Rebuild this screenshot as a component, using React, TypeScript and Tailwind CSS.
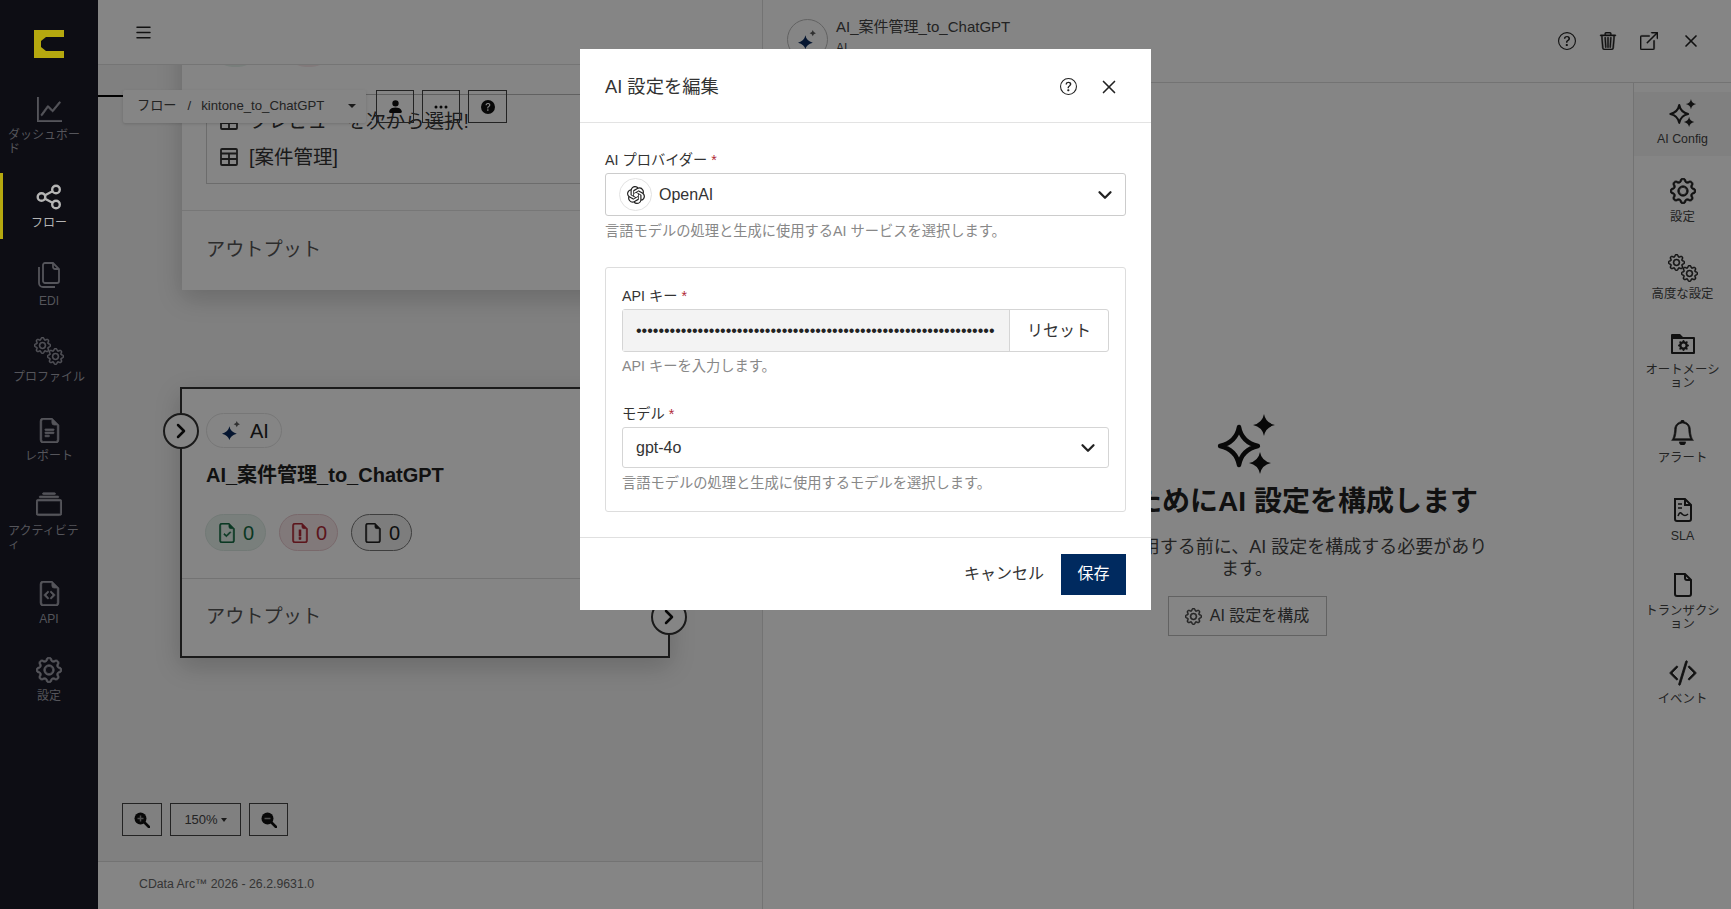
import React from 'react'
import { ChevronDown, ChevronRight, X } from 'lucide-react'
import {
  BsBell, BsBoxArrowUpRight, BsCodeSlash, BsCollection, BsFileEarmark, BsFileEarmarkCheck,
  BsFileEarmarkCode, BsFileEarmarkText, BsGear, BsGearFill, BsGraphUp, BsList,
  BsPersonFill, BsQuestionCircle, BsQuestionCircleFill, BsThreeDots, BsTrash3,
} from 'react-icons/bs'
import { SiOpenai } from 'react-icons/si'

const bold = { stroke: 'currentColor', strokeWidth: 0.45 }

const Logo = () => (
  <svg width="30" height="28" viewBox="0 0 30 28" fill="#b5a80f">
    <path d="M0 0H30V7H12L7 11V17L12 21H30V28H0Z" />
  </svg>
)

const Gears = ({ size = 30 }: { size?: number }) => (
  <svg width={size} height={size} viewBox="0 0 30 30" fill="currentColor">
    <BsGear x={0} y={1} size={17} {...bold} />
    <BsGear x={13} y={12} size={17} {...bold} />
  </svg>
)

const ShareNodes = () => (
  <svg width="26" height="26" viewBox="0 0 26 26" fill="none" stroke="currentColor" strokeWidth="2.400">
    <circle cx="20" cy="5.500" r="3.800" />
    <circle cx="5.500" cy="13" r="3.800" />
    <circle cx="20" cy="20.500" r="3.800" />
    <path d="M9 11.200l7.500-3.900M9 14.800l7.500 3.900" />
  </svg>
)

const Files = () => (
  <svg width="26" height="26" viewBox="0 0 26 26" fill="none" stroke="currentColor" strokeWidth="1.800">
    <path d="M9 1h8l6 6v12a2 2 0 0 1-2 2H9a2 2 0 0 1-2-2V3a2 2 0 0 1 2-2z" />
    <path d="M17 1v4a2 2 0 0 0 2 2h4" />
    <path d="M3 5v16a4 4 0 0 0 4 4h12" />
  </svg>
)

const TableMark = () => (
  <svg width="18" height="18" viewBox="0 0 18 18" fill="none" stroke="currentColor" strokeWidth="1.800" className="shrink-0">
    <rect x="1" y="1" width="16" height="16" rx="1" />
    <path d="M1 5.500h16M1 11h16M9 5.500V17" />
  </svg>
)

const Sparkles = ({ size = 24 }: { size?: number }) => (
  <svg width={size} height={size} viewBox="0 0 32 32" fill="currentColor">
    <path d="M12 7.500Q13.400 15.200 21.500 17Q13.400 18.800 12 26.500Q10.600 18.800 2.500 17Q10.600 15.200 12 7.500Z" fill="none" stroke="currentColor" strokeWidth="2.200" strokeLinejoin="round" />
    <path d="M24.500 1Q25.300 5.500 30 6.500Q25.300 7.500 24.500 12Q23.700 7.500 19 6.500Q23.700 5.500 24.500 1Z" />
    <path d="M22.500 20Q23.300 24.500 28 25.500Q23.300 26.500 22.500 31Q21.700 26.500 17 25.500Q21.700 24.500 22.500 20Z" />
  </svg>
)

const AiMark = ({ size = 19 }: { size?: number }) => (
  <svg width={size} height={size} viewBox="0 0 18 18">
    <path d="M7 5Q8 10.500 14 12Q8 13.500 7 18Q6 13.500 0 12Q6 10.500 7 5Z" fill="#0a2a5c" />
    <path d="M14 0Q14.500 2.500 17 3Q14.500 3.500 14 6Q13.500 3.500 11 3Q13.500 2.500 14 0Z" fill="#5f5f5f" />
  </svg>
)

const FileAlert = ({ size = 20 }: { size?: number }) => (
  <svg width={size} height={size} viewBox="0 0 16 16" fill="currentColor" {...bold}>
    <path d="M14 4.500V14a2 2 0 0 1-2 2H4a2 2 0 0 1-2-2V2a2 2 0 0 1 2-2h5.500zm-3 0A1.500 1.500 0 0 1 9.500 3V1H4a1 1 0 0 0-1 1v12a1 1 0 0 0 1 1h8a1 1 0 0 0 1-1V4.500z" />
    <rect x="7.200" y="5.500" width="1.600" height="5" />
    <rect x="7.200" y="11.500" width="1.600" height="1.700" />
  </svg>
)

const FolderGear = () => (
  <svg width="26" height="26" viewBox="0 0 26 26" fill="currentColor">
    <path d="M1 4a1 1 0 0 1 1-1h8l3 3h11a1 1 0 0 1 1 1v15a1 1 0 0 1-1 1H2a1 1 0 0 1-1-1zM3 8v13h20V8z" />
    <BsGearFill x={8} y={9} size={11} />
  </svg>
)

const SlaFile = () => (
  <svg width="26" height="26" viewBox="0 0 26 26" fill="none" stroke="currentColor" strokeWidth="2">
    <path d="M5 2h10l6 6v14a2 2 0 0 1-2 2H7a2 2 0 0 1-2-2z" />
    <path d="M15 2v6h6" />
    <path d="M8 7h4M8 11h4M8 19c2-5 3-3 4-2s3 3 6 0" strokeWidth="1.600" />
  </svg>
)

const ThickFile = () => (
  <svg width="26" height="26" viewBox="0 0 26 26" fill="none" stroke="currentColor" strokeWidth="2">
    <path d="M5 2h10l6 6v14a2 2 0 0 1-2 2H7a2 2 0 0 1-2-2z" />
    <path d="M15 2v4a2 2 0 0 0 2 2h4" />
  </svg>
)

const ZoomMark = ({ minus = false }: { minus?: boolean }) => (
  <svg width="16" height="16" viewBox="0 0 16 16">
    <circle cx="6.500" cy="6.500" r="6" fill="#111" />
    <path d="M10.500 10.500L15 15" stroke="#111" strokeWidth="2.600" strokeLinecap="round" />
    <path d={minus ? 'M3.500 6.500h6' : 'M3.500 6.500h6M6.500 3.500v6'} stroke="#999" strokeWidth="1.500" />
  </svg>
)

const navItems = [
  { label: 'ダッシュボード', icon: <BsGraphUp size={25} {...bold} />, height: 'h-[88px]', wrapped: true },
  { label: 'フロー', icon: <ShareNodes />, height: 'h-[78px]', active: true },
  { label: 'EDI', icon: <Files />, height: 'h-[76px]' },
  { label: 'プロファイル', icon: <Gears />, height: 'h-[79px]' },
  { label: 'レポート', icon: <BsFileEarmarkText size={25} {...bold} />, height: 'h-[75px]' },
  { label: 'アクティビティ', icon: <BsCollection size={26} {...bold} />, height: 'h-[88px]', wrapped: true },
  { label: 'API', icon: <BsFileEarmarkCode size={25} {...bold} />, height: 'h-[77px]' },
  { label: '設定', icon: <BsGear size={26} {...bold} />, height: 'h-[70px]' },
]

const tabItems = [
  { label: 'AI Config', icon: <Sparkles size={30} />, height: 'h-[78px]', active: true },
  { label: '設定', icon: <BsGear size={26} {...bold} />, height: 'h-[77px]' },
  { label: '高度な設定', icon: <Gears />, height: 'h-[76px]' },
  { label: 'オートメーション', icon: <FolderGear />, height: 'h-[88px]' },
  { label: 'アラート', icon: <BsBell size={25} {...bold} />, height: 'h-[78px]' },
  { label: 'SLA', icon: <SlaFile />, height: 'h-[75px]' },
  { label: 'トランザクション', icon: <ThickFile />, height: 'h-[88px]' },
  { label: 'イベント', icon: <BsCodeSlash size={28} {...bold} />, height: 'h-[70px]' },
]

const Asterisk = () => <span className="text-[#b02a37]"> *</span>

const App: React.FC = () => {
  return (
    <div className="relative flex h-[909px] w-full overflow-hidden bg-white font-['Liberation_Sans','Noto_Sans_CJK_JP',sans-serif] text-[#3a3a3a]">
      {/* Sidebar sits above the dim layer, its colours are as photographed */}
      <aside className="relative z-20 flex w-[98px] shrink-0 flex-col bg-[#0d0d14] text-[#55555b]">
        <div className="flex h-[85px] shrink-0 justify-center pt-[30px]">
          <Logo />
        </div>
        {navItems.map((item) => (
          <div key={item.label} className={`relative flex shrink-0 flex-col items-center px-[8px] pt-[11px] ${item.height} ${item.active ? 'text-[#b4b4b4]' : ''}`}>
            {item.active && <span className="absolute left-0 top-0 h-[66px] w-[3px] bg-[#b5a80f]" />}
            <div className="flex h-[26px] items-center justify-center">{item.icon}</div>
            <div className={`mt-[6px] text-[12px] leading-[14px] [line-break:anywhere] ${item.wrapped ? 'w-[78px] self-start' : ''}`}>{item.label}</div>
          </div>
        ))}
      </aside>

      {/* Flow canvas */}
      <main className="flex w-[664px] shrink-0 flex-col">
        <header className="z-10 flex h-[65px] shrink-0 items-center border-b border-[#e0e0e0] bg-white pl-[35px]">
          <BsList size={21} className="text-[#222]" />
        </header>
        <div className="relative flex-1 overflow-hidden bg-[#f5f5f5]">
          <span className="absolute left-0 top-[30px] h-[2px] w-[30px] bg-black" />

          {/* First node, clipped by the header */}
          <div className="absolute left-[84px] top-[-60px] w-[485px] bg-white shadow-[0_8px_24px_rgba(0,0,0,0.18)]">
            <div className="flex gap-[30px] pl-[32px] pt-[25px]">
              <span className="h-[37px] w-[43px] rounded-full bg-[#e6f2ec]" />
              <span className="h-[37px] w-[43px] rounded-full bg-[#f7e8ea]" />
            </div>
            <div className="mx-[24px] mt-[27px] h-[90px] border border-[#cfcfcf] border-t-[#bbb] pl-[13px] pt-[8px] text-[19.500px] leading-[36px] text-[#333]">
              <div className="flex items-center gap-[11px]"><TableMark />プレビューを次から選択!</div>
              <div className="flex items-center gap-[11px]"><TableMark />[案件管理]</div>
            </div>
            <div className="mt-[26px] flex h-[80px] items-center border-t border-[#e4e4e4] pl-[24px] text-[19.200px] text-[#555]">アウトプット</div>
          </div>

          {/* Selected AI node */}
          <div className="absolute left-[82px] top-[322px] flex h-[271px] w-[490px] flex-col border-2 border-[#333] bg-white shadow-[0_8px_24px_rgba(0,0,0,0.18)]">
            <span className="absolute left-[-19px] top-[24px] flex h-[36px] w-[36px] items-center justify-center rounded-full border-2 border-[#333] bg-white text-[#111]">
              <ChevronRight size={24} strokeWidth={2.500} />
            </span>
            <div className="ml-[24px] mt-[24px] flex h-[35px] w-[76px] items-center gap-[9px] rounded-full border border-[#e4e4e4] pl-[15px] text-[20px] text-[#222]">
              <AiMark />
              AI
            </div>
            <div className="ml-[24px] mt-[14px] text-[20px] font-bold leading-[26px] text-[#222]">AI_案件管理_to_ChatGPT</div>
            <div className="ml-[23px] mt-[26px] flex gap-[13px] text-[20px]">
              <span className="flex h-[37px] w-[61px] items-center justify-center gap-[6px] rounded-full border border-[#dbe9e3] bg-[#e8f3ee] text-[#146c43]"><BsFileEarmarkCheck size={20} {...bold} />0</span>
              <span className="flex h-[37px] w-[59px] items-center justify-center gap-[6px] rounded-full border border-[#e8c9ce] bg-[#f7e8ea] text-[#b02a37]"><FileAlert />0</span>
              <span className="flex h-[37px] w-[61px] items-center justify-center gap-[6px] rounded-full border border-[#777] bg-[#f0f0f0] text-[#222]"><BsFileEarmark size={20} {...bold} />0</span>
            </div>
            <div className="mt-[27px] flex flex-1 items-center border-t border-[#dcdcdc] pl-[24px] text-[19.200px] text-[#555]">アウトプット</div>
            <span className="absolute right-[-19px] top-[210px] flex h-[36px] w-[36px] items-center justify-center rounded-full border-2 border-[#333] bg-white text-[#111]">
              <ChevronRight size={24} strokeWidth={2.500} />
            </span>
          </div>

          {/* Floating toolbar */}
          <div className="absolute left-[25px] top-[25px] flex items-start gap-[10px]">
            <div className="flex h-[33px] w-[243px] items-center rounded-[2px] bg-white pb-[1px] pl-[14px] text-[13.200px] text-[#444] shadow-[0_1px_3px_rgba(0,0,0,0.15)]">
              <span>フロー</span>
              <span className="ml-[11px]">/</span>
              <span className="ml-[10px]">kintone_to_ChatGPT</span>
              <span className="ml-[24px] h-0 w-0 border-x-[4px] border-t-[4px] border-x-transparent border-t-[#333]" />
            </div>
            <div className="flex gap-[8px]">
              <span className="flex h-[33px] w-[38px] items-center justify-center border border-[#444] text-[#111]"><BsPersonFill size={17} /></span>
              <span className="flex h-[33px] w-[38px] items-center justify-center border border-[#444] text-[#111]"><BsThreeDots size={16} /></span>
              <span className="flex h-[33px] w-[39px] items-center justify-center border border-[#444] text-[#111]"><BsQuestionCircleFill size={14} /></span>
            </div>
          </div>

          {/* Zoom controls */}
          <div className="absolute bottom-[25px] left-[24px] flex gap-[8px]">
            <span className="flex h-[33px] w-[40px] items-center justify-center border border-[#444]"><ZoomMark /></span>
            <span className="flex h-[33px] w-[71px] items-center justify-center gap-[3px] border border-[#444] text-[13px] text-[#444]">
              150%
              <span className="h-0 w-0 border-x-[3px] border-t-[4px] border-x-transparent border-t-[#333]" />
            </span>
            <span className="flex h-[33px] w-[39px] items-center justify-center border border-[#444]"><ZoomMark minus /></span>
          </div>
        </div>
        <footer className="flex h-[48px] shrink-0 items-center border-t border-[#dcdcdc] bg-white pb-[3px] pl-[41px] text-[12.300px] text-[#666]">
          CData Arc™ 2026 - 26.2.9631.0
        </footer>
      </main>

      {/* Detail panel */}
      <section className="flex min-w-0 flex-1 flex-col border-l border-[#dcdcdc]">
        <header className="flex h-[83px] shrink-0 items-start justify-between border-b border-[#dcdcdc] bg-white">
          <div className="flex items-start gap-[8px] pl-[24px] pt-[19px]">
            <span className="flex h-[41px] w-[41px] items-center justify-center rounded-full border border-[#bbb]"><AiMark /></span>
            <div className="-mt-[1px] text-[15px] leading-[17px] text-[#444]">
              AI_案件管理_to_ChatGPT
              <div className="mt-[5px] text-[12px]">AI</div>
            </div>
          </div>
          <div className="flex items-center gap-[23px] pr-[30px] pt-[31px] text-[#222]">
            <BsQuestionCircle size={18} />
            <BsTrash3 size={18} {...bold} />
            <BsBoxArrowUpRight size={18} {...bold} />
            <X size={20} />
          </div>
        </header>
        <div className="flex min-h-0 flex-1">
          <div className="flex min-w-0 flex-1 flex-col items-center pl-[98px] pt-[329px] text-[#333]">
            <div className="text-[#111]"><Sparkles size={64} /></div>
            <h2 className="ml-[6px] mt-[6px] whitespace-nowrap text-[28px] font-bold leading-[40px] text-[#222]">使用するためにAI 設定を構成します</h2>
            <p className="mt-[14px] w-[490px] text-center text-[18px] leading-[22px] text-[#444]">この AI 機能を使用する前に、AI 設定を構成する必要があります。</p>
            <div className="mt-[16px] flex h-[40px] w-[159px] items-center justify-center gap-[8px] border border-[#bcbcbc] text-[16px] text-[#444]">
              <BsGear size={17} {...bold} />
              AI 設定を構成
            </div>
          </div>
          <nav className="flex w-[98px] shrink-0 flex-col border-l border-[#dcdcdc] pt-[9px] text-[#222]">
            {tabItems.map((tab) => (
              <div key={tab.label} className={`flex shrink-0 flex-col items-center ${tab.height}`}>
                <div className={`flex w-full flex-col items-center px-[7px] pb-[9px] pt-[8px] ${tab.active ? 'h-[64px] bg-[#f5f5f5]' : ''}`}>
                  <div className="flex h-[26px] items-center justify-center">{tab.icon}</div>
                  <div className="mt-[7px] text-center text-[12.400px] leading-[13px] text-[#444] [line-break:anywhere]">{tab.label}</div>
                </div>
              </div>
            ))}
          </nav>
        </div>
      </section>

      {/* Dim layer */}
      <div className="absolute inset-0 z-10 bg-black/[0.48]" />

      {/* Modal */}
      <div className="absolute left-[580px] top-[49px] z-30 flex w-[571px] flex-col bg-white text-[#333]">
        <div className="flex h-[74px] items-center justify-between border-b border-[#e3e3e3] pl-[25px] pr-[31px] pt-[2px]">
          <h3 className="text-[18.300px] text-[#333]">AI 設定を編集</h3>
          <div className="flex items-center gap-[21px] text-[#222]">
            <BsQuestionCircle size={17} />
            <X size={22} strokeWidth={1.800} />
          </div>
        </div>
        <div className="px-[25px] pt-[28px]">
          <label className="block text-[14.250px] leading-[18px]">AI プロバイダー<Asterisk /></label>
          <div className="mt-[4px] flex h-[43px] items-center justify-between rounded-[3px] border border-[#ccc] pl-[13px] pr-[9px]">
            <div className="flex items-center gap-[7px] text-[16px]">
              <span className="flex h-[33px] w-[33px] items-center justify-center rounded-full border border-[#e2e2e2] text-[#222]"><SiOpenai size={18} /></span>
              OpenAI
            </div>
            <ChevronDown size={22} strokeWidth={2.500} className="text-[#222]" />
          </div>
          <p className="mt-[5px] text-[14.250px] leading-[20px] text-[#888]">言語モデルの処理と生成に使用するAI サービスを選択します。</p>

          <div className="mt-[26px] h-[245px] rounded-[3px] border border-[#ddd] px-[16px] pt-[19px]">
            <label className="block text-[14.250px] leading-[18px]">API キー<Asterisk /></label>
            <div className="mt-[4px] flex h-[43px] rounded-[3px] border border-[#d5d5d5]">
              <div className="flex flex-1 items-center overflow-hidden bg-[#f3f3f3] pl-[13px] text-[16px] text-[#222]">{'•'.repeat(64)}</div>
              <div className="flex w-[99px] items-center justify-center border-l border-[#d5d5d5] text-[16px]">リセット</div>
            </div>
            <p className="mt-[4px] text-[14.250px] leading-[20px] text-[#888]">API キーを入力します。</p>
            <label className="mt-[29px] block text-[14.250px] leading-[18px]">モデル<Asterisk /></label>
            <div className="mt-[4px] flex h-[41px] items-center justify-between rounded-[3px] border border-[#d5d5d5] pl-[13px] pr-[9px] text-[16px]">
              gpt-4o
              <ChevronDown size={22} strokeWidth={2.500} className="text-[#222]" />
            </div>
            <p className="mt-[5px] text-[14.250px] leading-[20px] text-[#888]">言語モデルの処理と生成に使用するモデルを選択します。</p>
          </div>
        </div>
        <div className="mt-[25px] flex h-[73px] items-center justify-end gap-[17px] border-t border-[#e0e0e0] pr-[25px]">
          <span className="text-[16px]">キャンセル</span>
          <span className="flex h-[41px] w-[65px] items-center justify-center bg-[#002a5f] text-[16px] text-white">保存</span>
        </div>
      </div>
    </div>
  )
}

export default App
